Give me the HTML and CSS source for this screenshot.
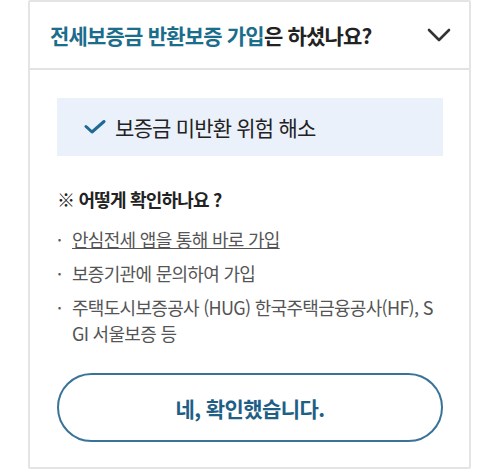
FILE: index.html
```html
<!DOCTYPE html>
<html lang="ko">
<head>
    <meta charset="UTF-8">
    <meta name="viewport" content="width=device-width, initial-scale=1.0">
    <title>전세보증금 반환보증 가입 확인</title>
    <link rel="stylesheet" href="styles.css">
</head>
<body>
    <div class="card">
        <div class="card-head">
            <h2 class="title"><span class="accent">전세보증금 반환보증 가입</span>은 하셨나요?</h2>
            <svg class="chevron" width="24" height="14" viewBox="0 0 24 14">
                <polyline points="2,2 12,12 22,2" fill="none" stroke="#333" stroke-width="2.6" stroke-linecap="round" stroke-linejoin="round"/>
            </svg>
        </div>
        <div class="card-body">
            <div class="notice">
                <svg class="check" width="22" height="14" viewBox="0 0 22 14">
                    <polyline points="2,6.5 8,12 20,1.5" fill="none" stroke="#1e6a93" stroke-width="3" stroke-linecap="round" stroke-linejoin="round"/>
                </svg>
                <span>보증금 미반환 위험 해소</span>
            </div>
            <p class="how">※ 어떻게 확인하나요 ?</p>
            <ul class="steps">
                <li><a href="#">안심전세 앱을 통해 바로 가입</a></li>
                <li>보증기관에 문의하여 가입</li>
                <li>주택도시보증공사 (HUG) 한국주택금융공사(HF), SGI 서울보증 등</li>
            </ul>
            <button class="confirm">네, 확인했습니다.</button>
        </div>
    </div>
</body>
</html>
```

FILE: styles.css
```css
body {
    margin: 0;
    padding: 0;
    background-color: #fff;
    font-family: 'Noto Sans CJK KR', 'Noto Sans', sans-serif;
    color: #222;
}

.card {
    width: 443px;
    margin: 0 0 0 28px;
    border: 2px solid #e4e4e4;
    border-radius: 2px;
    box-sizing: border-box;
}

.card-head {
    display: flex;
    align-items: center;
    justify-content: space-between;
    height: 66px;
    padding: 0 18px 0 20px;
    border-bottom: 2px solid #e2e2e2;
}

.title {
    margin: 0;
    font-size: 21px;
    font-weight: 700;
    letter-spacing: -0.8px;
    color: #222;
}

.accent {
    color: #1b6d8c;
}

.chevron {
    display: block;
}

.card-body {
    padding: 28px 26px 25px 27px;
}

.notice {
    display: flex;
    align-items: center;
    height: 58px;
    padding-left: 27px;
    background-color: #ebf1fb;
    font-size: 21px;
    letter-spacing: -0.8px;
    color: #222;
}

.check {
    margin-right: 9px;
}

.how {
    margin: 30px 0 0;
    font-size: 18px;
    font-weight: 700;
    line-height: 26px;
    letter-spacing: -0.8px;
}

.steps {
    list-style: none;
    margin: 14px 0 0;
    padding: 0;
    display: flex;
    flex-direction: column;
    gap: 8px;
}

.steps li {
    position: relative;
    padding-left: 15px;
    font-size: 18px;
    line-height: 26px;
    letter-spacing: -0.7px;
    color: #555;
    word-break: break-all;
}

.steps li::before {
    content: '·';
    position: absolute;
    left: 0;
    top: 0;
    color: #555;
}

.steps a {
    color: #555;
    text-decoration: underline;
}

.confirm {
    display: block;
    width: 100%;
    height: 69px;
    margin-top: 27px;
    border: 2px solid #3a7398;
    border-radius: 35px;
    background-color: #fff;
    font-family: inherit;
    font-size: 21px;
    font-weight: 700;
    letter-spacing: -0.6px;
    color: #1f5f86;
    cursor: pointer;
}
```
